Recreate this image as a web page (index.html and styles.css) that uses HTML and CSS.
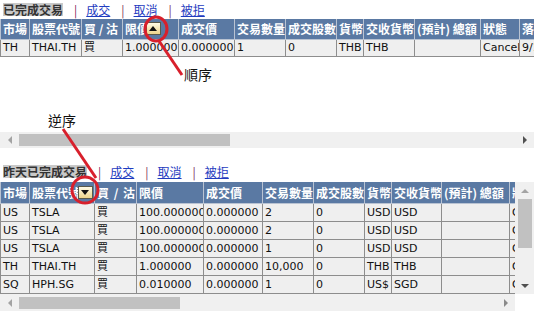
FILE: index.html
```html
<!DOCTYPE html>
<html lang="zh-Hant">
<head>
<meta charset="utf-8">
<title>已完成交易</title>
<link rel="stylesheet" href="styles.css">
</head>
<body>
<div class="page">
  <section class="panel panel-top">
    <div class="tabs">
      <span class="tab-current">已完成交易</span>
      <span class="sep">|</span><a class="tab-link" href="#">成交</a>
      <span class="sep">|</span><a class="tab-link" href="#">取消</a>
      <span class="sep">|</span><a class="tab-link" href="#">被拒</a>
    </div>
    <div class="viewport vp-top">
      <table class="grid grid-top">
        <colgroup>
          <col class="w29"><col class="w52"><col class="w41"><col class="w56"><col class="w56"><col class="w51"><col class="w51"><col class="w27"><col class="w51"><col class="w66"><col class="w39"><col class="w70">
        </colgroup>
        <thead>
          <tr><th>市場</th><th>股票代號</th><th>買 / 沽</th><th>限價<span class="sort sort-up"></span></th><th>成交價</th><th>交易數量</th><th>成交股數</th><th>貨幣</th><th>交收貨幣</th><th>(預計) 總額</th><th>狀態</th><th>落盤時間</th></tr>
        </thead>
        <tbody>
          <tr><td>TH</td><td>THAI.TH</td><td>買</td><td>1.000000</td><td>0.000000</td><td>1</td><td>0</td><td>THB</td><td>THB</td><td></td><td>Cancel</td><td>9/17/2020</td></tr>
        </tbody>
      </table>
    </div>
    <div class="hbar">
      <span class="arrbox"><span class="arr arr-left"></span></span>
      <span class="thumb thumb-top"></span>
      <span class="spacer"></span>
      <span class="arrbox"><span class="arr arr-right"></span></span>
    </div>
  </section>

  <section class="panel panel-bottom">
    <div class="tabs tabs-bottom">
      <span class="tab-current">昨天已完成交易</span>
      <span class="sep">|</span><a class="tab-link" href="#">成交</a>
      <span class="sep">|</span><a class="tab-link" href="#">取消</a>
      <span class="sep">|</span><a class="tab-link" href="#">被拒</a>
    </div>
    <div class="grid-row">
      <div class="viewport vp-bottom">
        <table class="grid grid-bottom">
          <colgroup>
            <col class="w29"><col class="w65"><col class="w42"><col class="w67"><col class="w59"><col class="w51"><col class="w51"><col class="w27"><col class="w50"><col class="w68"><col class="w50"><col class="w70">
          </colgroup>
          <thead>
            <tr><th>市場</th><th>股票代號<span class="sort sort-down"></span></th><th class="bs">買 / 沽</th><th>限價</th><th>成交價</th><th>交易數量</th><th>成交股數</th><th>貨幣</th><th>交收貨幣</th><th>(預計) 總額</th><th>狀態</th><th>落盤時間</th></tr>
          </thead>
          <tbody>
            <tr><td>US</td><td>TSLA</td><td>買</td><td>100.000000</td><td>0.000000</td><td>2</td><td>0</td><td>USD</td><td>USD</td><td></td><td>Cancel</td><td>9/17/2020</td></tr>
            <tr><td>US</td><td>TSLA</td><td>買</td><td>100.000000</td><td>0.000000</td><td>2</td><td>0</td><td>USD</td><td>USD</td><td></td><td>Cancel</td><td>9/17/2020</td></tr>
            <tr><td>US</td><td>TSLA</td><td>買</td><td>100.000000</td><td>0.000000</td><td>1</td><td>0</td><td>USD</td><td>USD</td><td></td><td>Cancel</td><td>9/17/2020</td></tr>
            <tr><td>TH</td><td>THAI.TH</td><td>買</td><td>1.000000</td><td>0.000000</td><td>10,000</td><td>0</td><td>THB</td><td>THB</td><td></td><td>Cancel</td><td>9/17/2020</td></tr>
            <tr><td>SQ</td><td>HPH.SG</td><td>買</td><td>0.010000</td><td>0.000000</td><td>1</td><td>0</td><td>US$</td><td>SGD</td><td></td><td>Cancel</td><td>9/17/2020</td></tr>
            <tr><td>HK</td><td>00700.HK</td><td>買</td><td>1.000000</td><td>0.000000</td><td>1</td><td>0</td><td>HKD</td><td>HKD</td><td></td><td>Cancel</td><td>9/17/2020</td></tr>
          </tbody>
        </table>
      </div>
      <div class="vbar">
        <span class="varrbox"><span class="arr arr-up"></span></span>
        <span class="vthumb"></span>
        <span class="spacer"></span>
        <span class="varrbox"><span class="arr arr-down"></span></span>
      </div>
    </div>
    <div class="grid-row">
      <div class="hbar hbar-bottom">
        <span class="arrbox"><span class="arr arr-left"></span></span>
        <span class="thumb thumb-bottom"></span>
        <span class="spacer"></span>
        <span class="arrbox"><span class="arr arr-right arr-mid"></span></span>
      </div>
      <div class="corner"></div>
    </div>
  </section>

  <svg class="marks" width="534" height="319" viewBox="0 0 534 319" aria-hidden="true">
    <ellipse cx="156" cy="29" rx="11" ry="12" />
    <line x1="159" y1="41" x2="182" y2="75" />
    <ellipse cx="85" cy="190" rx="13" ry="13" />
    <line x1="63" y1="129" x2="96" y2="178" />
  </svg>
  <span class="note note-asc">順序</span>
  <span class="note note-desc">逆序</span>
</div>
</body>
</html>
```

FILE: styles.css
```css
html, body {
  margin: 0;
  padding: 0;
  background: #fff;
}

.page {
  position: relative;
  width: 534px;
  height: 319px;
  overflow: hidden;
  font-family: "DejaVu Sans", "Noto Sans CJK TC", sans-serif;
  color: #111;
}

/* tabs */
.tabs {
  height: 19px;
  box-sizing: border-box;
  display: flex;
  align-items: flex-end;
  padding: 0 0 3px 3px;
  font-family: "Noto Sans CJK TC", sans-serif;
  font-size: 12px;
  line-height: 13px;
}
.tabs-bottom {
  height: 22px;
  margin-top: 12px;
  padding-bottom: 4px;
}
.tab-current {
  background: #c9c9c9;
  color: #333;
  font-weight: bold;
}
.sep {
  color: #7b1f5e;
  margin: 0 9px 0 11px;
}
.tab-link {
  color: #1f3cc0;
  text-decoration: underline;
}

/* grids */
.viewport {
  overflow: hidden;
  position: relative;
}
.vp-top {
  width: 534px;
  height: 113px;
}
.vp-bottom {
  width: 515px;
  height: 112px;
}
.grid {
  border-collapse: collapse;
  table-layout: fixed;
}
.grid-top { width: 589px; }
.grid-bottom { width: 629px; }

.w27 { width: 27px; }
.w29 { width: 29px; }
.w39 { width: 39px; }
.w41 { width: 41px; }
.w42 { width: 42px; }
.w50 { width: 50px; }
.w51 { width: 51px; }
.w52 { width: 52px; }
.w56 { width: 56px; }
.w59 { width: 59px; }
.w65 { width: 65px; }
.w66 { width: 66px; }
.w67 { width: 67px; }
.w68 { width: 68px; }
.w70 { width: 70px; }

.grid th {
  height: 20px;
  padding: 0 0 0 2px;
  background: #5a79a3;
  color: #fff;
  font-family: "Noto Sans CJK TC", sans-serif;
  font-weight: bold;
  font-size: 12px;
  line-height: 14px;
  text-align: left;
  white-space: nowrap;
  overflow: hidden;
  border: 1px solid #b9c3d2;
  border-top: 0;
}
.grid th.bs { word-spacing: 2px; }
.grid-bottom th { height: 21px; }

.grid td {
  height: 16px;
  padding: 0 0 0 2px;
  background: #efefef;
  font-size: 11px;
  line-height: 14px;
  white-space: nowrap;
  overflow: hidden;
  border: 1px solid #8d8d8d;
}
.grid-bottom td { height: 17px; }

/* sort icon */
.sort {
  display: inline-block;
  position: relative;
  width: 13px;
  height: 11px;
  margin-left: -3px;
  vertical-align: -1px;
  border: 1px solid #5a5a4a;
  background: linear-gradient(#fffbe6, #ecd48a);
}
.grid-bottom .sort { margin-left: -2px; }
.sort::after {
  content: "";
  position: absolute;
  left: 2px;
  width: 0;
  height: 0;
  border-left: 4.5px solid transparent;
  border-right: 4.5px solid transparent;
}
.sort-up::after {
  top: 3px;
  border-bottom: 5px solid #111;
}
.sort-down::after {
  top: 3px;
  border-top: 5px solid #111;
}

/* scrollbars */
.hbar {
  display: flex;
  align-items: center;
  width: 534px;
  height: 16px;
  background: #f0f0f0;
}
.hbar-bottom {
  width: 515px;
  height: 17px;
}
.arrbox {
  width: 19px;
  height: 16px;
  display: flex;
  align-items: center;
  justify-content: center;
}
.spacer { flex: 1; }
.thumb {
  height: 12px;
  background: #c1c1c1;
}
.thumb-top { width: 211px; }
.thumb-bottom { width: 161px; }

.arr {
  width: 0;
  height: 0;
  display: block;
}
.arr-left {
  border-top: 4px solid transparent;
  border-bottom: 4px solid transparent;
  border-right: 4px solid #a3a3a3;
}
.arr-right {
  border-top: 4px solid transparent;
  border-bottom: 4px solid transparent;
  border-left: 4px solid #505050;
}
.arr-mid { border-left-color: #8a8a8a; }
.arr-up {
  border-left: 4px solid transparent;
  border-right: 4px solid transparent;
  border-bottom: 4px solid #a3a3a3;
}
.arr-down {
  border-left: 4px solid transparent;
  border-right: 4px solid transparent;
  border-top: 4px solid #505050;
}

.grid-row {
  display: flex;
}
.vbar {
  width: 19px;
  height: 112px;
  background: #f0f0f0;
  display: flex;
  flex-direction: column;
  align-items: center;
}
.varrbox {
  width: 19px;
  height: 17px;
  display: flex;
  align-items: center;
  justify-content: center;
}
.vthumb {
  width: 14px;
  height: 49px;
  background: #c1c1c1;
}
.corner {
  width: 19px;
  height: 17px;
  background: #fff;
}

/* annotations */
.marks {
  position: absolute;
  left: 0;
  top: 0;
  pointer-events: none;
}
.marks ellipse {
  fill: none;
  stroke: #d8202c;
  stroke-width: 3;
}
.marks line {
  stroke: #d8202c;
  stroke-width: 3;
}
.note {
  position: absolute;
  font-family: "Noto Sans CJK TC", sans-serif;
  font-size: 14px;
  line-height: 16px;
  color: #111;
}
.note-asc { left: 184px; top: 66px; }
.note-desc { left: 48px; top: 112px; }
```
